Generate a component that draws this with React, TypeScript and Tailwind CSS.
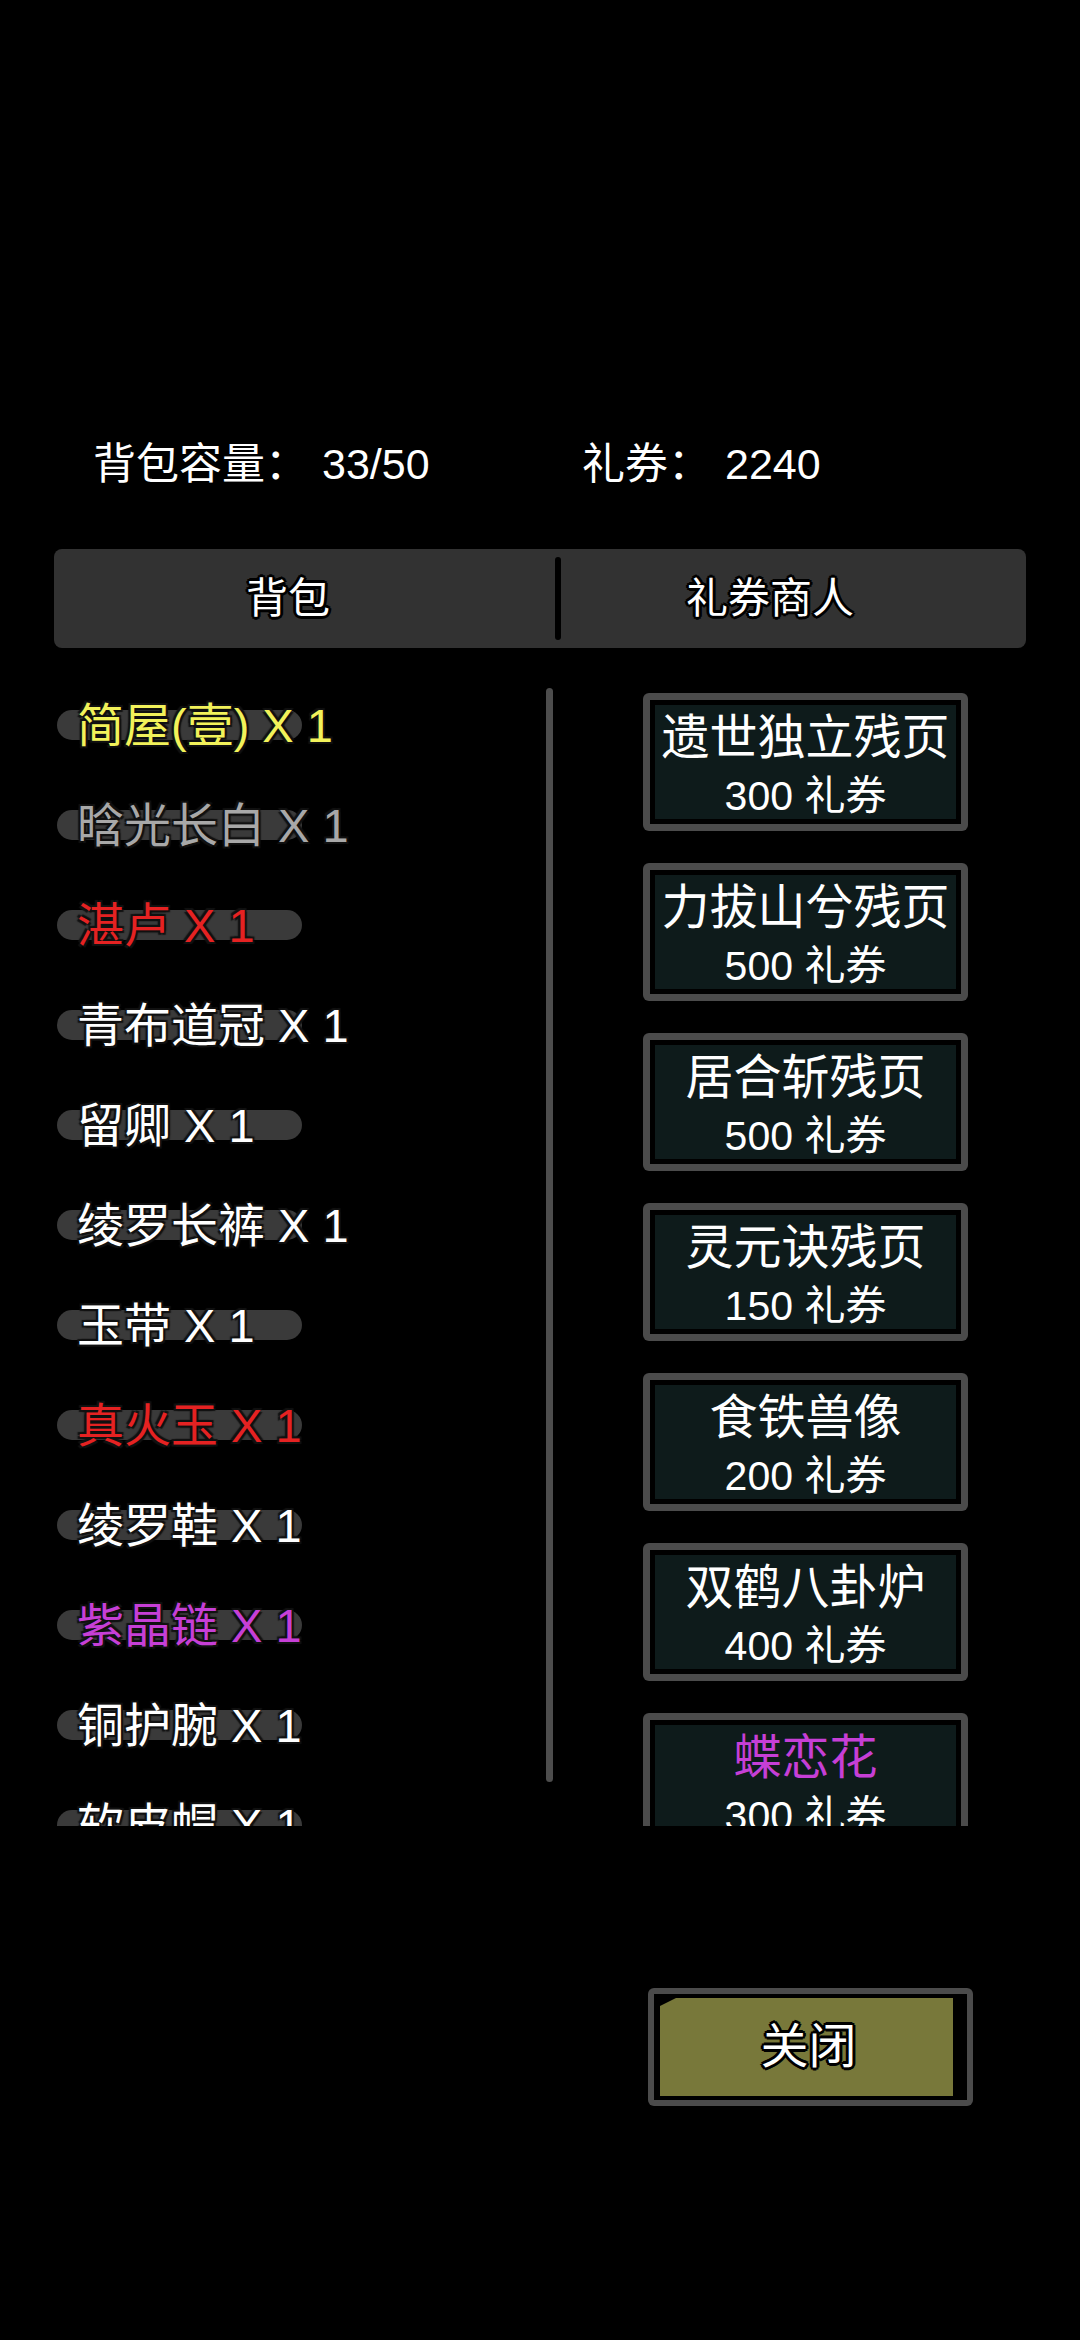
import React from "react";

const items = [
  { name: "简屋(壹)", color: "text-[#f2f25a]" },
  { name: "晗光长白", color: "text-[#a8a8a8]" },
  { name: "湛卢", color: "text-[#e52222]" },
  { name: "青布道冠", color: "text-white" },
  { name: "留卿", color: "text-white" },
  { name: "绫罗长裤", color: "text-white" },
  { name: "玉带", color: "text-white" },
  { name: "真火玉", color: "text-[#e52222]" },
  { name: "绫罗鞋", color: "text-white" },
  { name: "紫晶链", color: "text-[#c63fd6]" },
  { name: "铜护腕", color: "text-white" },
  { name: "软皮帽", color: "text-white" },
];

const goods = [
  { name: "遗世独立残页", price: 300, color: "text-white" },
  { name: "力拔山兮残页", price: 500, color: "text-white" },
  { name: "居合斩残页", price: 500, color: "text-white" },
  { name: "灵元诀残页", price: 150, color: "text-white" },
  { name: "食铁兽像", price: 200, color: "text-white" },
  { name: "双鹤八卦炉", price: 400, color: "text-white" },
  { name: "蝶恋花", price: 300, color: "text-[#c63fd6]" },
];

const outline =
  "[text-shadow:-2px_-2px_0_#000,2px_-2px_0_#000,-2px_2px_0_#000,2px_2px_0_#000,0_3px_0_#000,0_-3px_0_#000,3px_0_0_#000,-3px_0_0_#000]";

const soft =
  "[text-shadow:-2px_-2px_1px_#111,2px_-2px_1px_#111,-2px_2px_1px_#111,2px_2px_1px_#111]";

export default function App() {
  return (
    <div className="w-[1080px] h-[2340px] bg-black text-white overflow-hidden font-['Liberation_Sans','Noto_Sans_CJK_SC',sans-serif]">
      {/* Header */}
      <div className="pt-[438px] h-[490px] flex items-center text-[43px] leading-[52px]">
        <div className="ml-[93px] w-[489px] flex">
          <span>背包容量：</span>
          <span className="ml-[14px]">33/50</span>
        </div>
        <div className="flex">
          <span>礼券：</span>
          <span className="ml-[14px]">2240</span>
        </div>
      </div>

      {/* Tabs */}
      <div className="mt-[59px] mx-[54px] h-[99px] rounded-[8px] bg-[#323232] flex items-center">
        <div className={`w-[501px] flex justify-center pr-[33px] text-[42px] ${outline}`}>背包</div>
        <div className="w-[6px] h-[83px] rounded-full bg-black" />
        <div className={`w-[465px] flex justify-center pr-[47px] text-[42px] ${outline}`}>礼券商人</div>
      </div>

      {/* Lists */}
      <div className="mt-[27px] h-[1151px] flex overflow-hidden">
        <div className="w-[546px] flex flex-col">
          {items.map((it) => (
            <div key={it.name} className="relative h-[100px] shrink-0 flex items-center">
              <div className="absolute left-[57px] top-[35px] w-[245px] h-[30px] rounded-full bg-[#3a3a3a]" />
              <span className={`relative ml-[77px] text-[47px] leading-none ${it.color} ${soft}`}>
                {it.name} X 1
              </span>
            </div>
          ))}
        </div>

        <div className="mt-[13px] w-[7px] h-[1094px] rounded-full bg-[#4d4d4d]" />

        <div className="ml-[90px] pt-[18px] flex flex-col gap-[32px]">
          {goods.map((g) => (
            <div
              key={g.name}
              className="w-[325px] h-[138px] shrink-0 rounded-[6px] bg-[#4b4b4b] p-[7px]"
            >
              <div className="w-full h-full bg-black p-[5px]">
                <div className="w-full h-full bg-[#0e1b1b] pt-[10px] flex flex-col items-center justify-center">
                  <span className={`text-[48px] leading-[58px] whitespace-nowrap ${g.color}`}>{g.name}</span>
                  <span className="text-[41px] leading-[58px] text-white whitespace-nowrap">{g.price} 礼券</span>
                </div>
              </div>
            </div>
          ))}
        </div>
      </div>

      {/* Close */}
      <div className="mt-[162px] ml-[648px] w-[325px] h-[118px] rounded-[6px] bg-[#4b4b4b] p-[6px]">
        <div className="w-full h-full bg-black pl-[6px] pr-[14px] py-[4px]">
          <div className="relative w-full h-full bg-[#78783a] flex items-center justify-center">
            <div className="absolute left-0 top-0 w-0 h-0 border-t-[8px] border-r-[16px] border-t-black border-r-transparent" />
            <span className={`text-[48px] pl-[4px] ${outline}`}>关闭</span>
          </div>
        </div>
      </div>
    </div>
  );
}
